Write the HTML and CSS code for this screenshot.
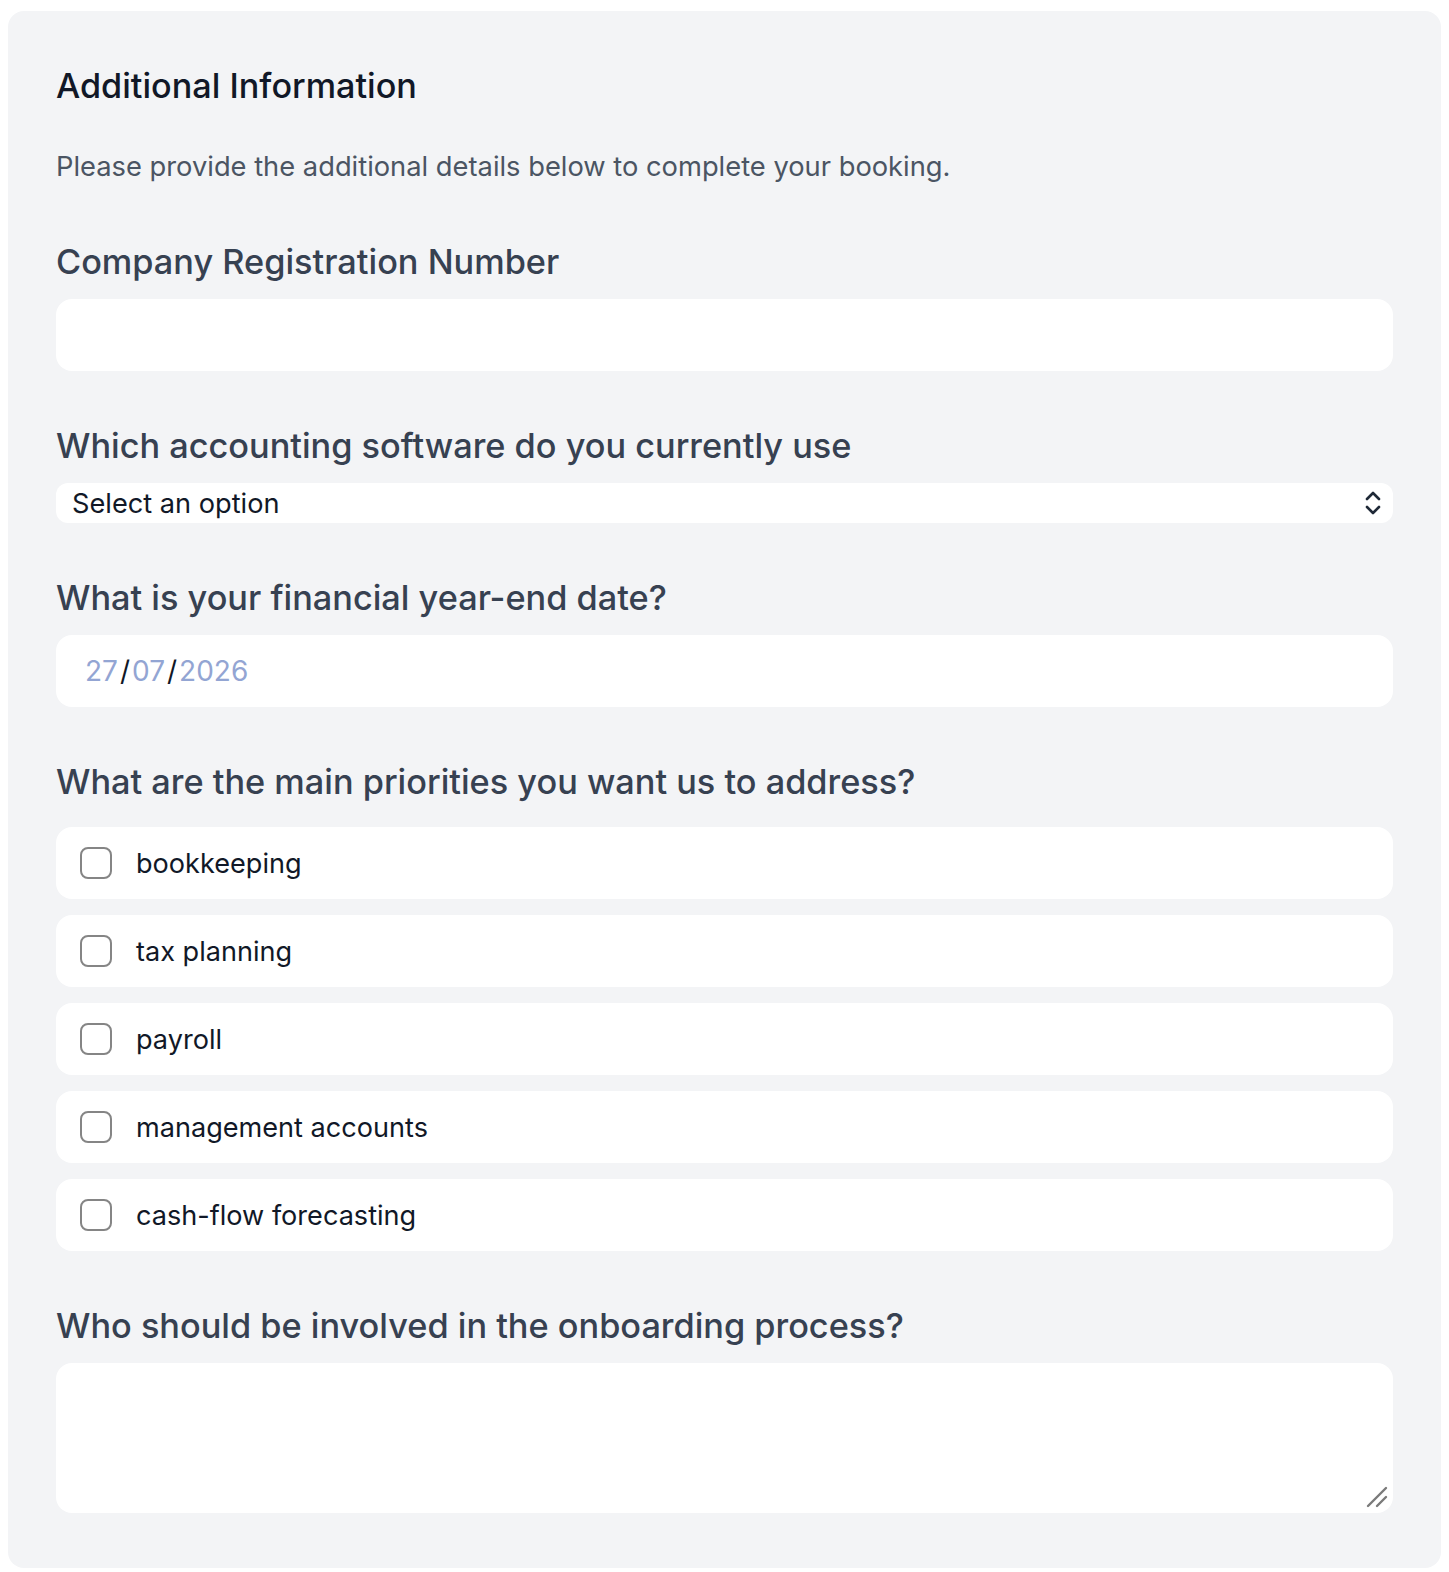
FILE: index.html
```html
<!DOCTYPE html>
<html lang="en">
<head>
<meta charset="utf-8">
<title>Additional Information</title>
<link rel="stylesheet" href="styles.css">
</head>
<body>
<div class="card">
  <h2 class="title">Additional Information</h2>
  <p class="subtitle">Please provide the additional details below to complete your booking.</p>

  <div class="field">
    <label class="label">Company Registration Number</label>
    <input class="input" type="text">
  </div>

  <div class="field">
    <label class="label">Which accounting software do you currently use</label>
    <div class="select-wrap">
      <select class="select"><option>Select an option</option></select>
      <svg class="chev" width="20" height="26" viewBox="0 0 20 26"><path d="M4 9 L10 3 L16 9 M4 17 L10 23 L16 17" fill="none" stroke="#1f2937" stroke-width="2.6" stroke-linecap="round" stroke-linejoin="round"/></svg>
    </div>
  </div>

  <div class="field">
    <label class="label">What is your financial year-end date?</label>
    <div class="input date"><span class="seg">27</span><span class="slash">/</span><span class="seg">07</span><span class="slash">/</span><span class="seg">2026</span></div>
  </div>

  <div class="field">
    <label class="label label-group">What are the main priorities you want us to address?</label>
    <div class="checks">
      <label class="check"><span class="box"></span><span>bookkeeping</span></label>
      <label class="check"><span class="box"></span><span>tax planning</span></label>
      <label class="check"><span class="box"></span><span>payroll</span></label>
      <label class="check"><span class="box"></span><span>management accounts</span></label>
      <label class="check"><span class="box"></span><span>cash-flow forecasting</span></label>
    </div>
  </div>

  <div class="field last">
    <label class="label">Who should be involved in the onboarding process?</label>
    <div class="ta-wrap">
      <textarea class="textarea"></textarea>
      <svg class="grip" width="24" height="24" viewBox="0 0 24 24"><path d="M3 21 L21 3 M12 21 L21 12" stroke="#7a7a7a" stroke-width="2.4" stroke-linecap="round"/></svg>
    </div>
  </div>
</div>
</body>
</html>
```

FILE: styles.css
```css
* { box-sizing: border-box; }
html, body { margin: 0; padding: 0; }
body {
  padding: 11px 8px 9px 8px;
  background: #ffffff;
  font-family: Inter, "Noto Sans", "Liberation Sans", sans-serif;
}
.card {
  background: #f3f4f6;
  border-radius: 16px;
  padding: 48px 48px 55px 48px;
}
.title {
  margin: 0;
  font-size: 34.2px;
  line-height: 54px;
  font-weight: 500;
  color: #111827;
}
.subtitle {
  margin: 34px 0 0 0;
  font-size: 27.3px;
  line-height: 40px;
  color: #4b5563;
}
.field { margin-top: 51px; }
.label {
  display: block;
  font-size: 34.3px;
  line-height: 48px;
  font-weight: 500;
  color: #374151;
  margin-bottom: 13px;
}
.label-group { margin-bottom: 21px; }
.input {
  display: block;
  width: 100%;
  height: 72px;
  border: none;
  border-radius: 16px;
  background: #ffffff;
  outline: none;
  font-family: inherit;
}
.select-wrap { position: relative; }
.select {
  display: block;
  width: 100%;
  height: 40px;
  -webkit-appearance: none;
  appearance: none;
  border: none;
  border-radius: 12px;
  background: #ffffff;
  padding: 0 16px;
  font-family: inherit;
  font-size: 27.2px;
  color: #111827;
  outline: none;
}
.chev {
  position: absolute;
  right: 10px;
  top: 7px;
}
.date {
  display: flex;
  align-items: center;
  padding-left: 29px;
  font-size: 28px;
}
.seg { color: #93a5d3; }
.slash { color: #111827; padding: 0 2px; }
.checks {
  display: flex;
  flex-direction: column;
  gap: 16px;
}
.check {
  display: flex;
  align-items: center;
  height: 72px;
  background: #ffffff;
  border-radius: 16px;
  padding-left: 24px;
  font-size: 27.1px;
  color: #111827;
}
.box {
  width: 32px;
  height: 32px;
  border: 2px solid #858585;
  border-radius: 8px;
  margin-right: 24px;
  flex: none;
}
.ta-wrap { position: relative; }
.textarea {
  display: block;
  width: 100%;
  height: 150px;
  border: none;
  border-radius: 16px;
  background: #ffffff;
  resize: none;
  outline: none;
  font-family: inherit;
}
.grip {
  position: absolute;
  right: 4px;
  bottom: 4px;
}
```
